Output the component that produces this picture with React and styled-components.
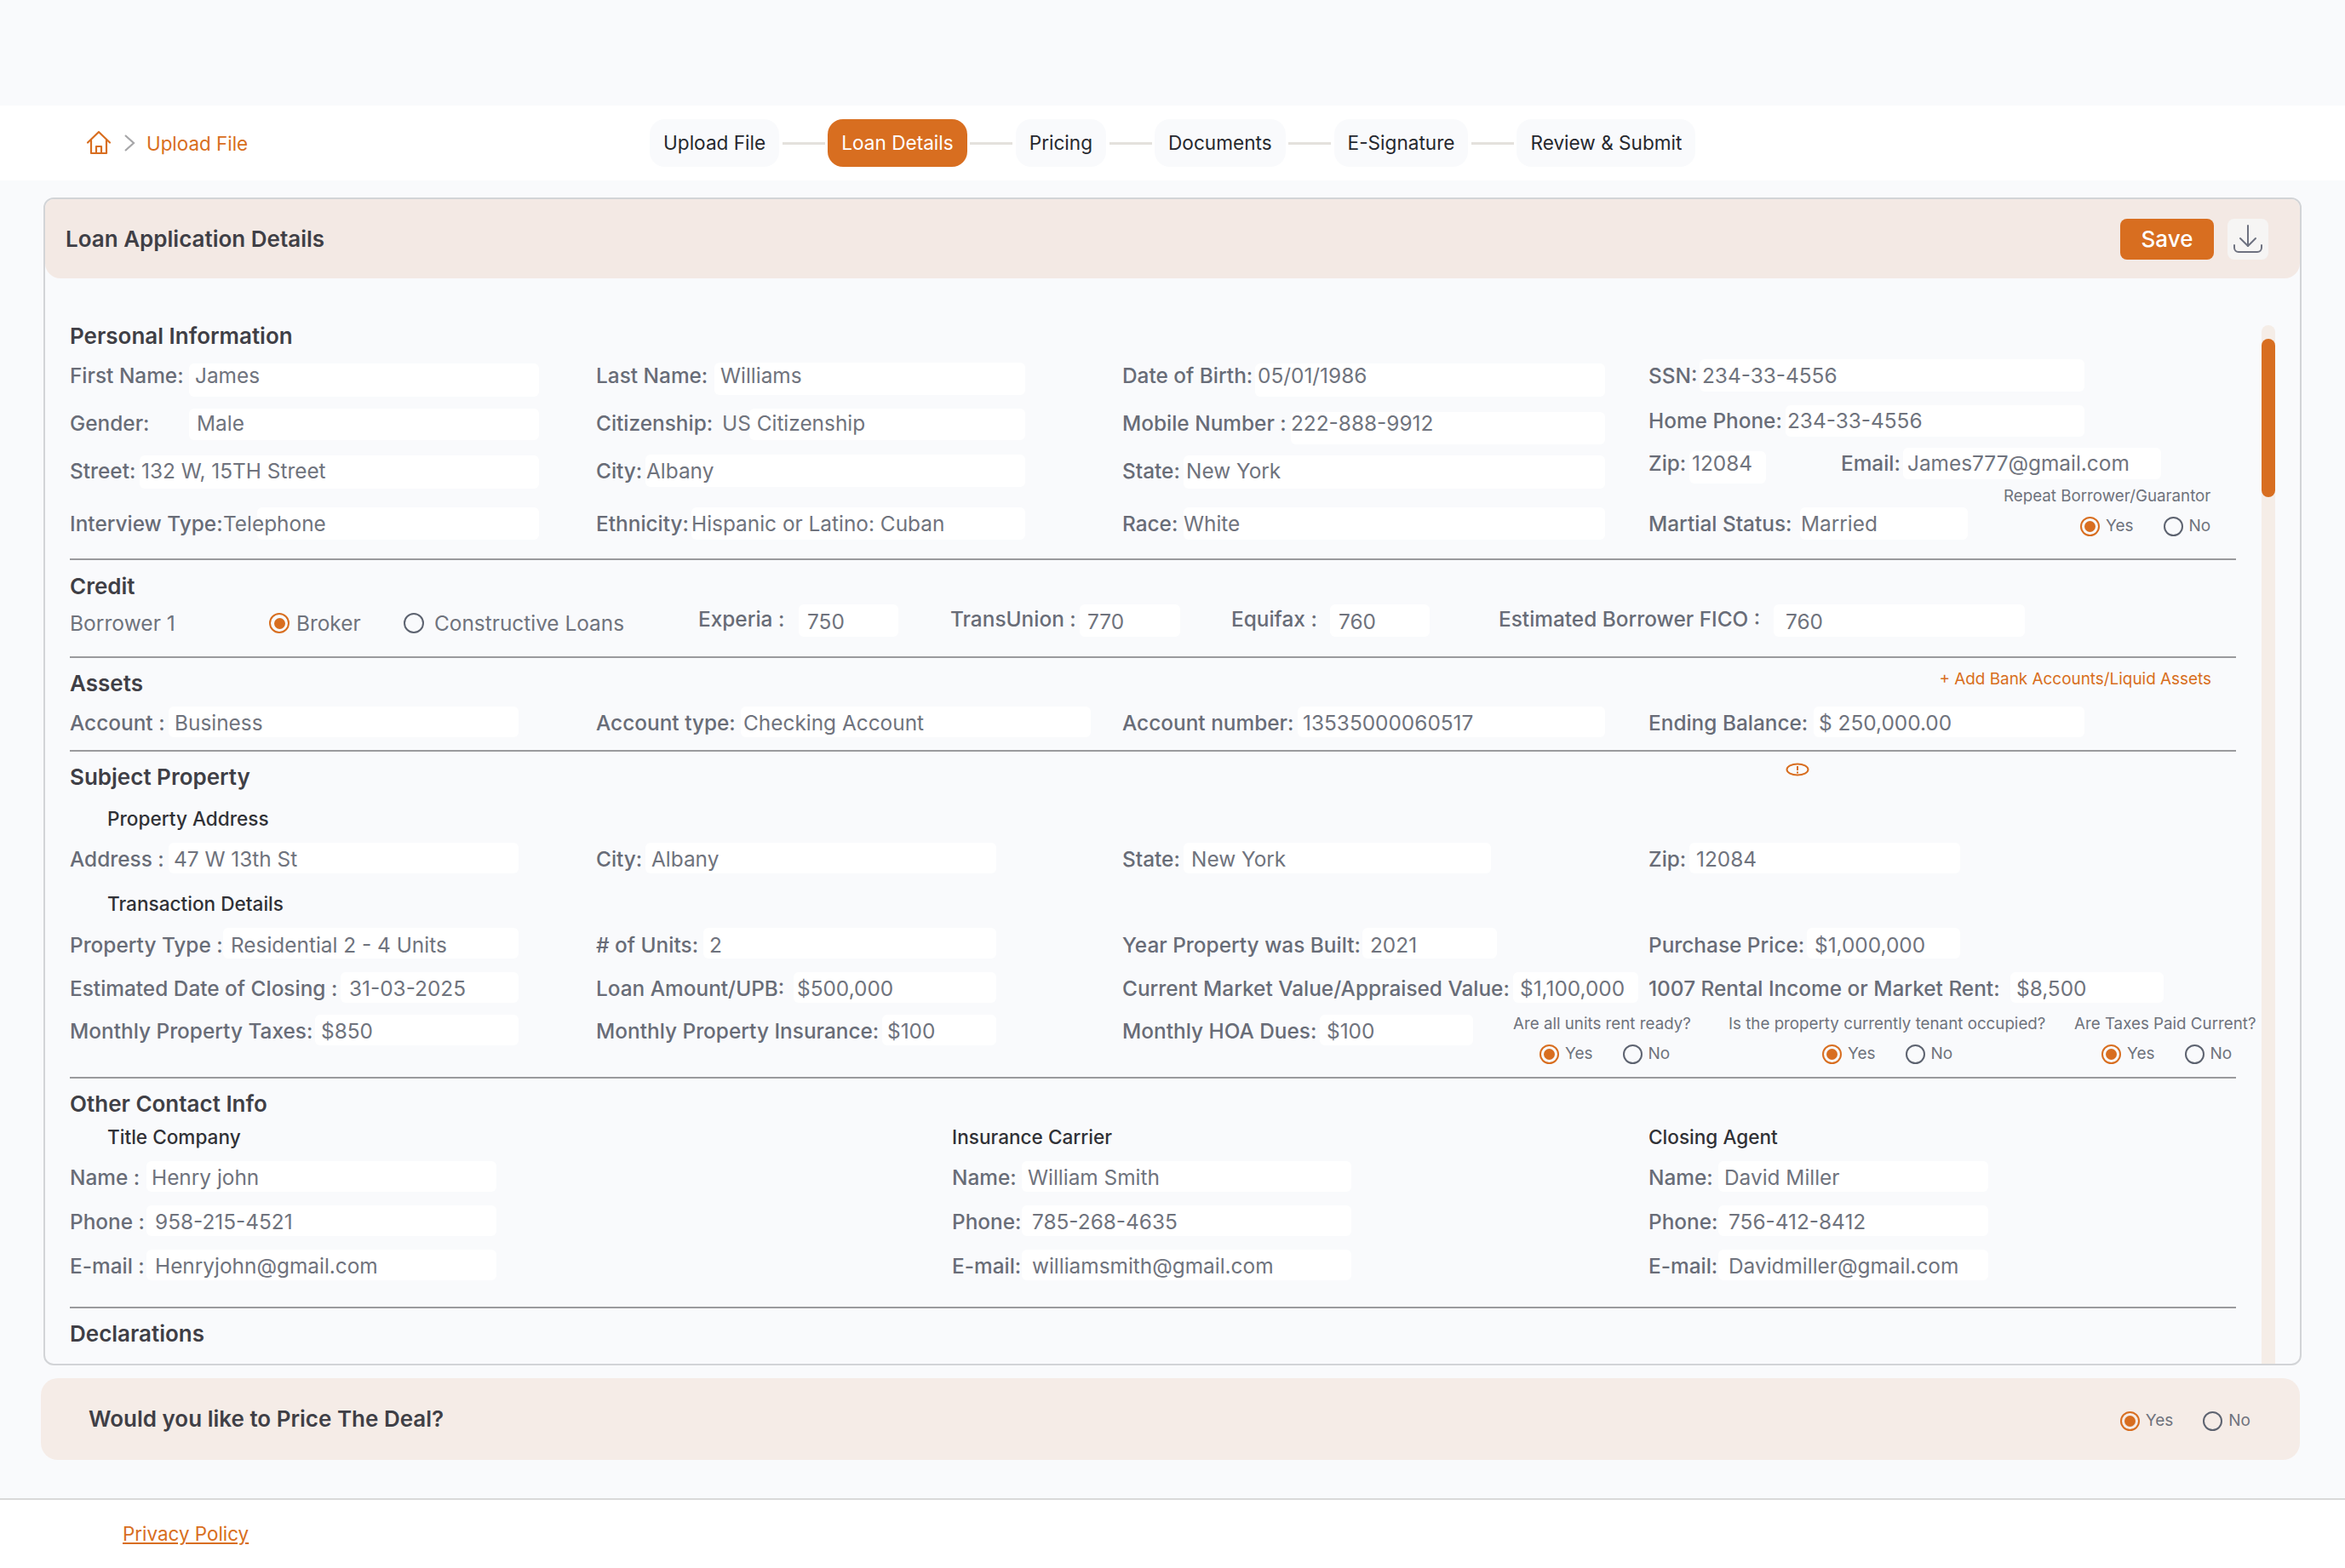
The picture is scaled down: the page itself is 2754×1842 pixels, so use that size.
import styled, { createGlobalStyle } from "styled-components";

const GlobalStyle = createGlobalStyle`
  html, body {
    margin: 0;
    padding: 0;
    background: #ffffff;
  }
  * {
    box-sizing: border-box;
  }
  body {
    font-family: Inter, "Liberation Sans", sans-serif;
  }
`;

const ORANGE = "#d86e20";

const Page = styled.div`
  width: 2754px;
  height: 1842px;
  overflow: hidden;
  background: #f9fafc;
  padding-top: 124px;
`;

const Nav = styled.nav`
  height: 88px;
  background: #ffffff;
  display: flex;
  align-items: center;
  padding-left: 101px;
`;

const Crumbs = styled.div`
  width: 662px;
  display: flex;
  align-items: center;
  font-size: 22.4px;
  color: ${ORANGE};
  svg {
    display: block;
  }
`;

const Steps = styled.div`
  display: flex;
  align-items: center;
`;

const Step = styled.div`
  height: 56px;
  padding: 0 16px;
  border-radius: 18px;
  background: ${(p) => (p.$active ? ORANGE : "#f9fafc")};
  color: ${(p) => (p.$active ? "#ffffff" : "#26282e")};
  font-size: 22.6px;
  line-height: 56px;
  white-space: nowrap;
`;

const Connector = styled.div`
  width: 50px;
  height: 3px;
  margin: 0 3.5px;
  background: #e4e1dd;
`;

const Card = styled.section`
  width: 2652px;
  height: 1372px;
  margin: 20px 0 0 51px;
  border: 2px solid #d2d4d7;
  border-radius: 12px;
  overflow: hidden;
  display: flex;
  flex-direction: column;
`;

const CardHead = styled.header`
  height: 93px;
  flex: none;
  background: #f3e9e4;
  border-radius: 0 0 18px 18px;
  padding: 0 37px 0 24px;
  display: flex;
  align-items: center;
  justify-content: space-between;
`;

const CardTitle = styled.h2`
  margin: 0;
  font-size: 26px;
  font-weight: 600;
  color: #3f3f46;
`;

const HeadActions = styled.div`
  display: flex;
  gap: 16px;
`;

const SaveButton = styled.button`
  width: 110px;
  height: 48px;
  border: 0;
  border-radius: 8px;
  background: ${ORANGE};
  color: #ffffff;
  font: 500 26px Inter, sans-serif;
`;

const IconButton = styled.button`
  width: 48px;
  height: 48px;
  border: 0;
  padding: 0;
  border-radius: 8px;
  background: #f6f5f4;
  display: flex;
  align-items: center;
  justify-content: center;
`;

const CardBody = styled.div`
  flex: 1;
  display: flex;
  min-height: 0;
  padding-left: 29px;
`;

const Form = styled.div`
  width: 2544px;
  padding-top: 52px;
`;

const Track = styled.div`
  width: 16px;
  margin: 55px 0 0 30px;
  background: #f5ede7;
  border-radius: 8px 8px 0 0;
`;

const Thumb = styled.div`
  height: 186px;
  margin-top: 16px;
  display: inline-block;
  width: 16px;
  background: ${ORANGE};
  border-radius: 8px;
`;

const Title = styled.h3`
  margin: ${(p) => p.$mt || 0}px 0 0;
  height: 32px;
  font-size: 26px;
  line-height: 32px;
  font-weight: 600;
  color: #3f3f46;
  white-space: nowrap;
`;

const TitleRow = styled.div`
  display: flex;
  justify-content: space-between;
  align-items: flex-start;
`;

const AddLink = styled.a`
  margin: 9px 29px 0 0;
  font-size: 18.9px;
  line-height: 32px;
  color: ${ORANGE};
`;

const AlertIcon = styled.svg`
  margin: 13px 501px 0 0;
`;

const SubTitle = styled.h4`
  margin: ${(p) => p.$mt || 0}px 0 0;
  padding-left: ${(p) => p.$pl || 0}px;
  height: 30px;
  font-size: 22.6px;
  line-height: 30px;
  font-weight: 500;
  color: #303136;
  white-space: nowrap;
`;

const Row = styled.div`
  display: grid;
  grid-template-columns: ${(p) => p.$cols || "618px 618px 618px 1fr"};
  height: 32px;
  margin-top: ${(p) => p.$mt || 0}px;
`;

const Cell = styled.div`
  display: flex;
  margin-top: ${(p) => p.$dy || 0}px;
  height: 32px;
`;

const FieldWrap = styled.div`
  display: flex;
  align-items: flex-start;
  height: 32px;
  margin-top: ${(p) => p.$dy || 0}px;
  margin-right: ${(p) => p.$mr || 0}px;
`;

const Label = styled.span`
  flex: none;
  width: ${(p) => p.$w}px;
  font-size: 24.4px;
  line-height: 32px;
  font-weight: 500;
  color: #686c77;
  white-space: nowrap;
`;

const Box = styled.div`
  flex: none;
  display: flex;
  align-items: flex-start;
  width: ${(p) => p.$w}px;
  height: ${(p) => p.$h}px;
  margin-top: ${(p) => p.$t}px;
  background: #ffffff;
  border-radius: 6px;
`;

const Value = styled.span`
  margin-top: ${(p) => p.$t}px;
  margin-left: ${(p) => p.$pad}px;
  font-size: 24.4px;
  line-height: 32px;
  color: #6f737d;
  white-space: nowrap;
`;

const Plain = styled.span`
  font-size: 24.6px;
  line-height: 32px;
  color: #6f737d;
  white-space: nowrap;
`;

const Divider = styled.hr`
  margin: ${(p) => p.$mt}px 0 0;
  border: 0;
  height: 2px;
  background: #9a9a9d;
`;

const RadioItem = styled.label`
  display: flex;
  align-items: center;
  gap: ${(p) => p.$gap || 7}px;
  font-size: ${(p) => (p.$big ? 24.4 : 19)}px;
  line-height: 32px;
  color: #6f737d;
  white-space: nowrap;
`;

const RadioDot = styled.span`
  flex: none;
  width: ${(p) => (p.$big ? 24 : 23)}px;
  height: ${(p) => (p.$big ? 24 : 23)}px;
  border-radius: 50%;
  border: 2px solid ${(p) => (p.$on ? ORANGE : "#5d6370")};
  display: flex;
  align-items: center;
  justify-content: center;
  &::after {
    content: "";
    width: 13px;
    height: 13px;
    border-radius: 50%;
    background: ${(p) => (p.$on ? ORANGE : "transparent")};
  }
`;

const RadioPair = styled.div`
  display: flex;
  gap: 35px;
  padding-left: ${(p) => p.$pl || 0}px;
`;

const Question = styled.div`
  margin-top: -4px;
  width: ${(p) => p.$w}px;
  flex: none;
  display: flex;
  flex-direction: column;
  gap: 7px;
`;

const QuestionText = styled.div`
  font-size: 18.75px;
  line-height: 24px;
  height: 24px;
  color: #6f737d;
  white-space: nowrap;
`;

const RepeatBlock = styled.div`
  flex: none;
  margin-top: -28px;
  width: 245px;
  display: flex;
  flex-direction: column;
  gap: 7px;
`;

const PriceBar = styled.div`
  width: 2653px;
  height: 96px;
  margin: 15px 0 0 48px;
  background: #f5ece7;
  border-radius: 20px;
  padding: 0 58px 0 56px;
  display: flex;
  align-items: center;
  justify-content: space-between;
`;

const PriceTitle = styled.div`
  font-size: 26px;
  font-weight: 600;
  color: #3f3f46;
  margin-top: -2px;
`;

const PriceRadios = styled.div`
  margin-top: 4px;
`;

const Footer = styled.footer`
  margin-top: 45px;
  height: 90px;
  background: #ffffff;
  border-top: 2px solid #d9d9d9;
  padding: 24px 0 0 144px;
`;

const PolicyLink = styled.a`
  font-size: 22.4px;
  line-height: 32px;
  color: ${ORANGE};
  text-decoration: underline;
`;

// t = box top relative to the text row, vy = extra shift of the value text
function Field({ label, value, lw, bw, t = -3, h = 36, pad = 7, dy, mr, vy = 0 }) {
  return (
    <FieldWrap $dy={dy} $mr={mr}>
      <Label $w={lw}>{label}</Label>
      <Box $w={bw} $h={h} $t={t}>
        <Value $t={vy - t} $pad={pad}>
          {value}
        </Value>
      </Box>
    </FieldWrap>
  );
}

function Radios({ pl }) {
  return (
    <RadioPair $pl={pl}>
      <RadioItem>
        <RadioDot $on />
        Yes
      </RadioItem>
      <RadioItem>
        <RadioDot />
        No
      </RadioItem>
    </RadioPair>
  );
}

function App() {
  return (
    <Page>
      <GlobalStyle />
      <Nav>
        <Crumbs>
          <svg width="30" height="30" viewBox="0 0 30 30" fill="none" stroke={ORANGE} strokeWidth="2.2" strokeLinecap="round" strokeLinejoin="round">
            <path d="M2 14.5 15 2l13 12.5" />
            <path d="M6 11.5V27h18V11.5" />
            <path d="M12 27v-8h6v8" />
          </svg>
          <svg style={{ margin: "0 13px 0 14px" }} width="14" height="22" viewBox="0 0 14 22" fill="none" stroke="#a6a6a8" strokeWidth="2.2">
            <path d="M2 2l10 9-10 9" />
          </svg>
          <span>Upload File</span>
        </Crumbs>
        <Steps>
          <Step>Upload File</Step>
          <Connector />
          <Step $active>Loan Details</Step>
          <Connector />
          <Step>Pricing</Step>
          <Connector />
          <Step>Documents</Step>
          <Connector />
          <Step>E-Signature</Step>
          <Connector />
          <Step>Review &amp; Submit</Step>
        </Steps>
      </Nav>

      <Card>
        <CardHead>
          <CardTitle>Loan Application Details</CardTitle>
          <HeadActions>
            <SaveButton>Save</SaveButton>
            <IconButton aria-label="Download">
              <svg width="36" height="36" viewBox="0 0 36 36" fill="none" stroke="#6e7280" strokeWidth="2" strokeLinecap="round" strokeLinejoin="round">
                <path d="M18 2v24" />
                <path d="M9 17l9 9 9-9" />
                <path d="M2 25v3a5 5 0 0 0 5 5h22a5 5 0 0 0 5-5v-3" />
              </svg>
            </IconButton>
          </HeadActions>
        </CardHead>
        <CardBody>
          <Form>
            <Title>Personal Information</Title>
            <Row $mt={14}>
              <Field label="First Name:" value="James" lw={140} bw={411} t={2} h={39} pad={7} />
              <Field label="Last Name:" value="Williams" lw={139} bw={365} t={1} h={38} pad={7} />
              <Field label="Date of Birth:" value="05/01/1986" lw={156} bw={411} t={2} h={39} pad={3} />
              <Field label="SSN:" value="234-33-4556" lw={60} bw={452} t={-3} h={38} pad={3} />
            </Row>
            <Row $mt={24}>
              <Field label="Gender:" value="Male" lw={140} bw={411} t={-1} h={37} pad={9} />
              <Field label="Citizenship:" value="US Citizenship" lw={180} bw={324} t={-1} h={37} pad={-32} />
              <Field label="Mobile Number :" value="222-888-9912" lw={198} bw={369} t={3} h={38} pad={0} />
              <Field label="Home Phone:" value="234-33-4556" lw={161} bw={351} t={-2} h={37} pad={2} dy={-3} />
            </Row>
            <Row $mt={24}>
              <Field label="Street:" value="132 W, 15TH Street" lw={82} bw={469} t={-2} h={39} pad={2} />
              <Field label="City:" value="Albany" lw={58} bw={446} t={-3} h={38} pad={1} />
              <Field label="State:" value="New York" lw={72} bw={495} t={-2} h={39} pad={3} />
              <Cell $dy={-9}>
                <Field label="Zip:" value="12084" lw={48} bw={90} t={2} h={38} pad={3} mr={88} />
                <Field label="Email:" value="James777@gmail.com" lw={73} bw={303} t={-2} h={37} pad={5} />
              </Cell>
            </Row>
            <Row $mt={30}>
              <Field label="Interview Type:" value="Telephone" lw={220} bw={331} t={-3} h={38} pad={-40} />
              <Field label="Ethnicity:" value="Hispanic or Latino: Cuban" lw={112} bw={392} t={-3} h={38} pad={0} />
              <Field label="Race:" value="White" lw={72} bw={495} t={-3} h={38} pad={0} />
              <Cell>
                <Field label="Martial Status:" value="Married" lw={178} bw={197} t={-3} h={38} pad={1} mr={42} />
                <RepeatBlock>
                  <QuestionText>Repeat Borrower/Guarantor</QuestionText>
                  <Radios pl={90} />
                </RepeatBlock>
              </Cell>
            </Row>
            <Divider $mt={25} />

            <Title $mt={15}>Credit</Title>
            <Row $mt={11} $cols="234px 158px 346px 296px 330px 314px 1fr">
              <Plain>Borrower 1</Plain>
              <RadioItem $big $gap={8}>
                <RadioDot $on $big />
                Broker
              </RadioItem>
              <RadioItem $big $gap={12}>
                <RadioDot $big />
                Constructive Loans
              </RadioItem>
              <Field label="Experia :" value="750" lw={118} bw={117} dy={-5} t={-1} h={38} pad={10} vy={3} />
              <Field label="TransUnion :" value="770" lw={152} bw={118} dy={-5} t={-1} h={38} pad={9} vy={3} />
              <Field label="Equifax :" value="760" lw={116} bw={117} dy={-5} t={-1} h={38} pad={10} vy={3} />
              <Field label="Estimated Borrower FICO :" value="760" lw={323} bw={295} dy={-5} t={-1} h={38} pad={14} vy={3} />
            </Row>
            <Divider $mt={23} />

            <TitleRow>
              <Title $mt={14}>Assets</Title>
              <AddLink>+ Add Bank Accounts/Liquid Assets</AddLink>
            </TitleRow>
            <Row $mt={14}>
              <Field label="Account :" value="Business" lw={116} bw={411} pad={7} />
              <Field label="Account type:" value="Checking Account" lw={170} bw={411} pad={3} />
              <Field label="Account number:" value="13535000060517" lw={206} bw={361} pad={6} />
              <Field label="Ending Balance:" value="$ 250,000.00" lw={194} bw={318} pad={6} />
            </Row>
            <Divider $mt={16} />

            <TitleRow>
              <Title $mt={14}>Subject Property</Title>
              <AlertIcon width="28" height="16" viewBox="0 0 28 16" fill="none" stroke={ORANGE}>
                <ellipse cx="14" cy="8" rx="12.5" ry="6.5" strokeWidth="2" />
                <path d="M14 4v5M14 10.5v2" strokeWidth="2" />
              </AlertIcon>
            </TitleRow>
            <SubTitle $mt={18} $pl={44}>Property Address</SubTitle>
            <Row $mt={16}>
              <Field label="Address :" value="47 W 13th St" lw={116} bw={411} pad={6} />
              <Field label="City:" value="Albany" lw={58} bw={412} pad={7} />
              <Field label="State:" value="New York" lw={72} bw={361} pad={9} />
              <Field label="Zip:" value="12084" lw={48} bw={318} pad={8} />
            </Row>
            <SubTitle $mt={22} $pl={44}>Transaction Details</SubTitle>
            <Row $mt={17}>
              <Field label="Property Type :" value="Residential 2 - 4 Units" lw={180} bw={347} t={-4} pad={9} />
              <Field label="# of Units:" value="2" lw={126} bw={344} t={-4} pad={7} />
              <Field label="Year Property was Built:" value="2021" lw={282} bw={158} t={-4} pad={9} />
              <Field label="Purchase Price:" value="$1,000,000" lw={186} bw={180} t={-4} pad={9} />
            </Row>
            <Row $mt={19}>
              <Field label="Estimated Date of Closing :" value="31-03-2025" lw={318} bw={209} pad={10} />
              <Field label="Loan Amount/UPB:" value="$500,000" lw={232} bw={238} pad={4} />
              <Field label="Current Market Value/Appraised Value:" value="$1,100,000" lw={459} bw={147} pad={8} />
              <Field label="1007 Rental Income or Market Rent:" value="$8,500" lw={425} bw={180} pad={7} />
            </Row>
            <Row $mt={18} $cols="618px 618px 459px 253px 406px 1fr">
              <Field label="Monthly Property Taxes:" value="$850" lw={288} bw={239} pad={7} />
              <Field label="Monthly Property Insurance:" value="$100" lw={336} bw={134} pad={6} />
              <Field label="Monthly HOA Dues:" value="$100" lw={232} bw={180} pad={8} />
              <Question $w={253}>
                <QuestionText>Are all units rent ready?</QuestionText>
                <Radios pl={31} />
              </Question>
              <Question $w={406}>
                <QuestionText>Is the property currently tenant occupied?</QuestionText>
                <Radios pl={110} />
              </Question>
              <Question $w={211}>
                <QuestionText>Are Taxes Paid Current?</QuestionText>
                <Radios pl={32} />
              </Question>
            </Row>
            <Divider $mt={38} />

            <Title $mt={14}>Other Contact Info</Title>
            <Row $mt={8} $cols="1036px 818px 1fr">
              <SubTitle $pl={44}>Title Company</SubTitle>
              <SubTitle>Insurance Carrier</SubTitle>
              <SubTitle>Closing Agent</SubTitle>
            </Row>
            <Row $mt={14} $cols="1036px 818px 1fr">
              <Field label="Name :" value="Henry john" lw={90} bw={411} pad={6} />
              <Field label="Name:" value="William Smith" lw={82} bw={387} pad={7} />
              <Field label="Name:" value="David Miller" lw={82} bw={317} pad={7} />
            </Row>
            <Row $mt={20} $cols="1036px 818px 1fr">
              <Field label="Phone :" value="958-215-4521" lw={90} bw={411} pad={10} />
              <Field label="Phone:" value="785-268-4635" lw={82} bw={387} pad={12} />
              <Field label="Phone:" value="756-412-8412" lw={82} bw={317} pad={12} />
            </Row>
            <Row $mt={20} $cols="1036px 818px 1fr">
              <Field label="E-mail :" value="Henryjohn@gmail.com" lw={90} bw={411} pad={10} />
              <Field label="E-mail:" value="williamsmith@gmail.com" lw={82} bw={387} pad={12} />
              <Field label="E-mail:" value="Davidmiller@gmail.com" lw={82} bw={317} pad={12} />
            </Row>
            <Divider $mt={32} />

            <Title $mt={14}>Declarations</Title>
          </Form>
          <Track>
            <Thumb />
          </Track>
        </CardBody>
      </Card>

      <PriceBar>
        <PriceTitle>Would you like to Price The Deal?</PriceTitle>
        <PriceRadios>
          <Radios />
        </PriceRadios>
      </PriceBar>

      <Footer>
        <PolicyLink>Privacy Policy</PolicyLink>
      </Footer>
    </Page>
  );
}

export default App;
